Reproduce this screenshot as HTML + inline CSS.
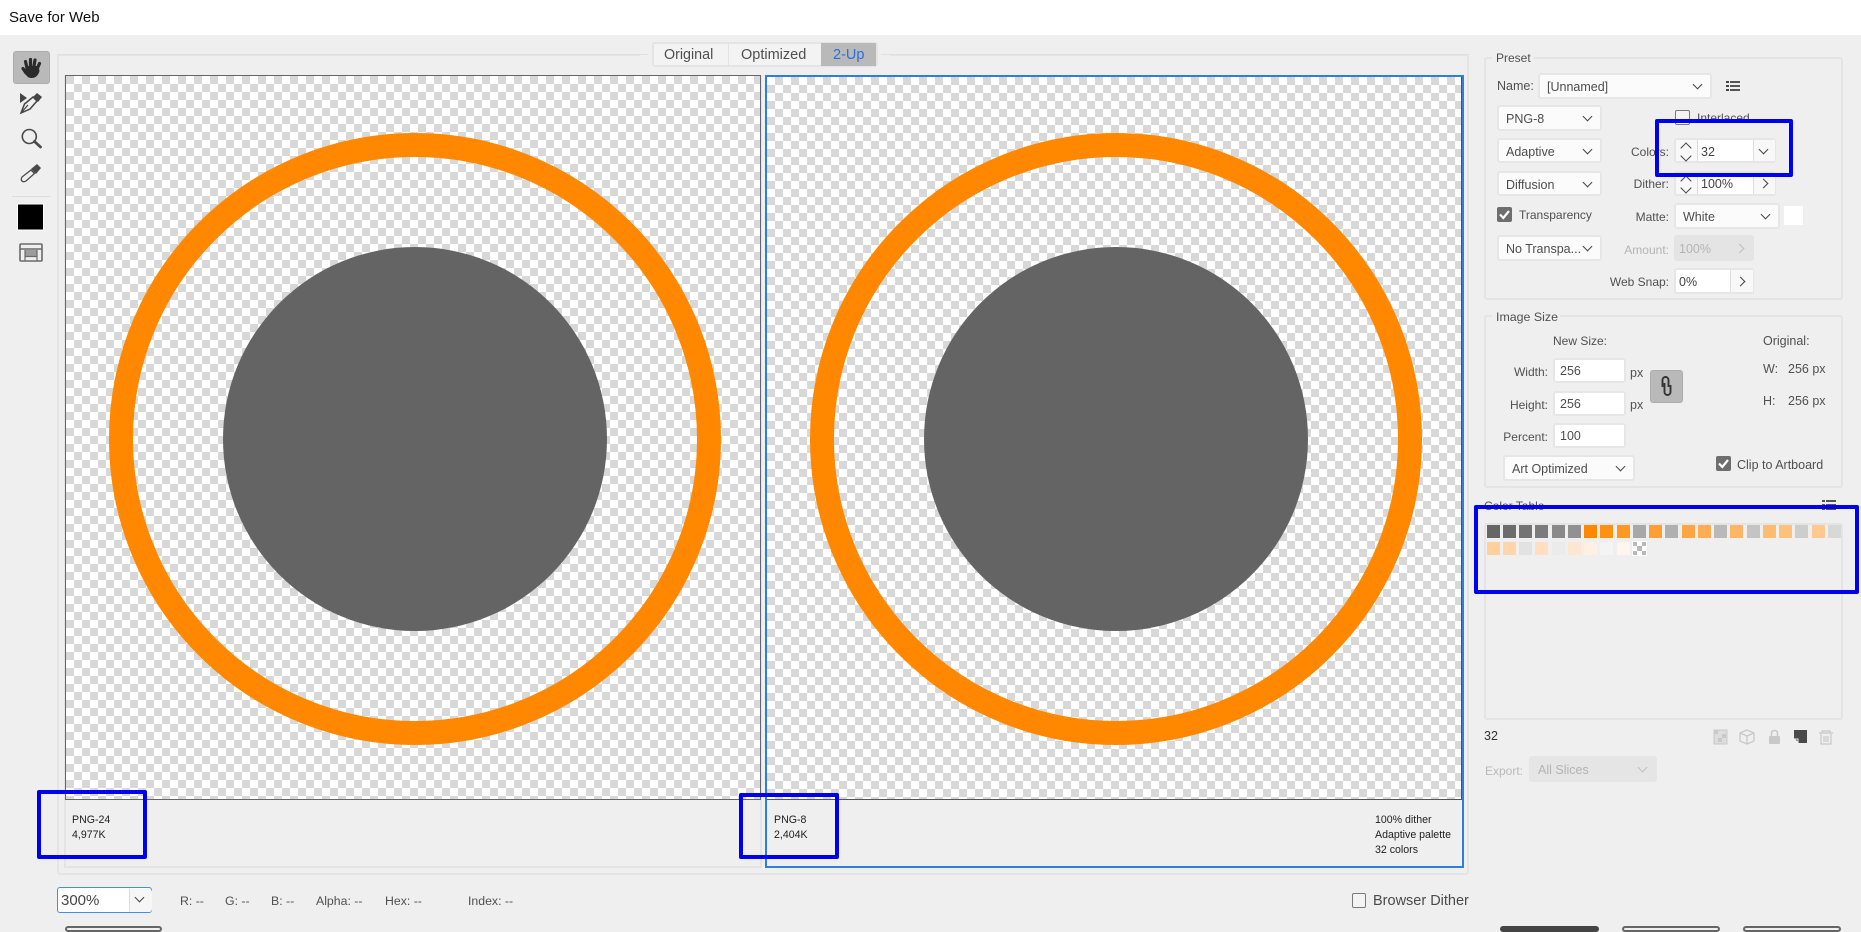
<!DOCTYPE html>
<html><head><meta charset="utf-8"><title>Save for Web</title>
<style>
html,body{margin:0;padding:0;width:1861px;height:928px;overflow:hidden;background:#efefef;font-family:"Liberation Sans",sans-serif;color:#505050;font-size:12.5px}
.a{position:absolute;white-space:nowrap}
.t{position:absolute;white-space:nowrap;line-height:16px}
.r{text-align:right}
.frame{position:absolute;border:2px solid #e4e4e4;border-radius:3px;box-sizing:border-box}
.sel{position:absolute;background:#fbfbfb;border:2px solid #e6e6e6;border-radius:3px;box-sizing:border-box;line-height:24px;padding-left:7px;color:#4d4d4d;font-size:12.5px;white-space:nowrap}
.sel::after{content:"";position:absolute;right:9px;top:6px;width:6px;height:6px;border-right:1.6px solid #444;border-bottom:1.6px solid #444;transform:rotate(45deg)}
.sel.dis{background:#e5e5e5;border-color:#e5e5e5;color:#b4b4b4}
.sel.dis::after{border-color:#c0c0c0}
.inp{position:absolute;background:#fff;border:2px solid #e6e6e6;border-radius:3px;box-sizing:border-box;line-height:23px;padding-left:5px;color:#4d4d4d;font-size:12.5px}
.cb{position:absolute;width:15px;height:15px;box-sizing:border-box;border-radius:2px}
.cb.on{background:#6e6e6e}
.cb.off{border:1.5px solid #7a7a7a;background:#f4f4f4}
.chev{position:absolute;width:6px;height:6px;border-right:1.6px solid #444;border-bottom:1.6px solid #444}
.blue{position:absolute;border:4px solid #0000f0;border-radius:2px;box-sizing:border-box;z-index:20}
.img{position:absolute;top:75px;height:725px;box-sizing:border-box;overflow:hidden;background-color:#fff;background-image:conic-gradient(#d8d8d8 25%,#fff 25% 50%,#d8d8d8 50% 75%,#fff 75%);background-size:16px 16px}
.sw{position:absolute;width:13px;height:13px}
.small{font-size:10.6px;color:#1e1e1e;line-height:15px}
.l{font-size:12px}
</style></head><body>

<div class="a" style="left:0;top:0;width:1861px;height:35px;background:#fff"></div>
<div class="t" style="left:9px;top:9px;font-size:15px;line-height:17px;color:#111">Save for Web</div>

<!-- tool column -->
<div class="a" style="left:13px;top:51px;width:37px;height:33px;background:#b9b9b9;border:1px solid #adadad;border-radius:3px;box-sizing:border-box"></div>
<svg class="a" style="left:0;top:0" width="60" height="270" viewBox="0 0 60 270">
 <g stroke="#2a2a2a" stroke-linecap="round" fill="none">
  <g stroke-width="3.200"><path d="M27 68L25.500 61.500M30.500 66L30.500 59.500M34 66L35 60M37.500 68L39.500 63.500M26 73L23 68.500"/></g>
 </g>
 <path d="M25.500 66H38.500L39.500 71Q37.500 78 31.500 78Q27 78 25 73Z" fill="#2a2a2a"/>
 <path d="M20 93L27 98L20 103Z" fill="#444"/>
 <path d="M21 113L24.500 104L33 97L37 101L30 109Z" fill="none" stroke="#444" stroke-width="1.500"/>
 <path d="M21 113L28 105" stroke="#444" stroke-width="1.200"/>
 <path d="M33 97L37 93L42 97L38 102Z" fill="#444"/>
 <circle cx="29.300" cy="136.500" r="7" fill="none" stroke="#4a4a4a" stroke-width="1.600"/>
 <path d="M34.500 141.500L40.500 147" stroke="#4a4a4a" stroke-width="2.800" stroke-linecap="round"/>
 <path d="M22 181Q20.500 180 22 177L31 170L34.500 173.500L26 181Q23.500 182.500 22 181Z" fill="none" stroke="#4a4a4a" stroke-width="1.300"/>
 <path d="M31 169L37 164L41 168L36 174Z" fill="#4a4a4a"/>
 <rect x="12" y="196" width="38" height="1" fill="#dcdcdc"/>
 <rect x="17.500" y="204" width="26" height="26" fill="#000" stroke="#fff" stroke-width="1"/>
 <rect x="20" y="244" width="22" height="17" rx="1" fill="none" stroke="#6a6a6a" stroke-width="1.600"/>
 <path d="M20 249H42" stroke="#6a6a6a" stroke-width="1.500"/>
 <rect x="25" y="250" width="12" height="6" fill="#9c9c9c"/>
 <path d="M25 250V261M37 250V261M25 256.500H37" stroke="#6a6a6a" stroke-width="1.200"/>
</svg>

<!-- main frame -->
<div class="frame" style="left:57px;top:54px;width:1412px;height:821px"></div>
<div class="a" style="left:64px;top:75px;width:698px;height:793px;border:2px solid #e4e4e4;box-sizing:border-box"></div>
<div class="a" style="left:640px;top:50px;width:250px;height:10px;background:#efefef"></div>
<div class="a" style="left:57px;top:54px;width:591px;height:1px;background:#e0e0e0"></div>
<div class="a" style="left:881px;top:54px;width:588px;height:1px;background:#e0e0e0"></div>

<!-- tabs -->
<div class="a" style="left:652px;top:42px;width:226px;height:25px;border:2px solid #e4e4e4;border-radius:3px;box-sizing:border-box;background:#f3f3f3"></div>
<div class="a" style="left:728px;top:43px;width:1px;height:23px;background:#e2e2e2"></div>
<div class="a" style="left:821px;top:43px;width:55px;height:23px;background:#b9b9b9"></div>
<div class="t" style="left:664px;top:47px;font-size:14.300px;color:#4f4f4f">Original</div>
<div class="t" style="left:741px;top:47px;font-size:14.500px;color:#4f4f4f">Optimized</div>
<div class="t" style="left:833px;top:47px;font-size:14.500px;color:#2b6fdc">2-Up</div>

<!-- left image -->
<div class="img" style="left:65px;width:696px;border:1.500px solid #666;background-position:-8px 0">
 <svg width="696" height="725" viewBox="0 0 696 725" style="position:absolute;left:-1.500px;top:-1.500px">
  <circle cx="350" cy="364" r="294" fill="none" stroke="#ff8800" stroke-width="24"/>
  <circle cx="350" cy="364" r="192" fill="#646464"/>
 </svg>
</div>
<!-- right image -->
<div class="a" style="left:765px;top:75px;width:699px;height:793px;border:2px solid #2a7fe0;box-sizing:border-box"></div>
<div class="img" style="left:767px;top:77px;height:723px;width:695px;border-bottom:1px solid #555;border-right:1px solid #555">
 <svg width="696" height="725" viewBox="0 0 696 725" style="position:absolute;left:-1px;top:-1px">
  <circle cx="350" cy="363" r="294" fill="none" stroke="#ff8800" stroke-width="24"/>
  <circle cx="350" cy="363" r="192" fill="#646464"/>
 </svg>
</div>

<div class="t small" style="left:72px;top:813px">PNG-24<br>4,977K</div>
<div class="t small" style="left:774px;top:813px">PNG-8<br>2,404K</div>
<div class="t small" style="left:1375px;top:813px">100% dither<br>Adaptive palette<br>32 colors</div>

<!-- bottom status -->
<div class="a" style="left:57px;top:887px;width:95px;height:26px;background:#fff;border:1.500px solid #3f8ee8;border-radius:3px;box-sizing:border-box"></div>
<div class="a" style="left:129px;top:889px;width:23px;height:23px;background:#f6f6f6;border-left:1px solid #ddd;box-sizing:border-box;border-radius:0 3px 3px 0"></div>
<div class="chev" style="left:136px;top:894px;transform:rotate(45deg)"></div>
<div class="t" style="left:61px;top:893px;font-size:15px;color:#444">300%</div>
<div class="t" style="left:180px;top:893px;font-size:12.300px">R: --</div>
<div class="t" style="left:225px;top:893px;font-size:12.300px">G: --</div>
<div class="t" style="left:271px;top:893px;font-size:12.300px">B: --</div>
<div class="t" style="left:316px;top:893px;font-size:12.300px">Alpha: --</div>
<div class="t" style="left:385px;top:893px;font-size:12.300px">Hex: --</div>
<div class="t" style="left:468px;top:893px;font-size:12.300px">Index: --</div>
<div class="cb off" style="left:1352px;top:893px;width:14px"></div>
<div class="t" style="left:1373px;top:893px;font-size:14.500px;color:#4a4a4a">Browser Dither</div>

<!-- bottom buttons peeking -->
<div class="a" style="left:65px;top:926px;width:97px;height:6px;border:2px solid #666;border-radius:6px;box-sizing:border-box"></div>
<div class="a" style="left:1500px;top:926px;width:99px;height:6px;background:#444;border-radius:6px"></div>
<div class="a" style="left:1622px;top:926px;width:98px;height:6px;border:2px solid #666;border-radius:6px;box-sizing:border-box"></div>
<div class="a" style="left:1743px;top:926px;width:98px;height:6px;border:2px solid #666;border-radius:6px;box-sizing:border-box"></div>

<!-- Preset -->
<div class="frame" style="left:1484px;top:57px;width:359px;height:243px"></div>
<div class="a" style="left:1492px;top:52px;width:42px;height:12px;background:#efefef"></div>
<div class="t l" style="left:1496px;top:50px">Preset</div>
<div class="t" style="left:1497px;top:78px">Name:</div>
<div class="sel" style="left:1538px;top:73px;width:174px;height:26px">[Unnamed]</div>
<svg class="a" style="left:1726px;top:80px" width="14" height="11"><path d="M0 1h3v2H0zM0 5h3v2H0zM0 9h3v2H0z" fill="#444"/><path d="M4 1h10v2H4zM4 5h10v2H4zM4 9h10v2H4z" fill="#555"/></svg>
<div class="sel" style="left:1497px;top:105px;width:105px;height:26px">PNG-8</div>
<div class="sel" style="left:1497px;top:138px;width:105px;height:25px">Adaptive</div>
<div class="sel" style="left:1497px;top:171px;width:105px;height:25px">Diffusion</div>
<div class="cb on" style="left:1497px;top:207px"><svg width="15" height="15"><path d="M3 7.500L6.300 11L12 4" fill="none" stroke="#fff" stroke-width="2.200"/></svg></div>
<div class="t l" style="left:1519px;top:207px">Transparency</div>
<div class="sel" style="left:1497px;top:235px;width:105px;height:26px">No Transpa...</div>
<div class="cb off" style="left:1675px;top:110px"></div>
<div class="t l" style="left:1697px;top:110px">Interlaced</div>
<div class="t l r" style="left:1600px;top:144px;width:69px">Colors:</div>
<div class="a" style="left:1674px;top:138px;width:102px;height:25px;background:#fff;border:2px solid #e6e6e6;border-radius:3px;box-sizing:border-box"></div>
<div class="a" style="left:1676px;top:140px;width:21px;height:21px;background:#f8f8f8;border-right:1px solid #ddd"></div>
<div class="a" style="left:1753px;top:140px;width:21px;height:21px;background:#f8f8f8;border-left:1px solid #ddd"></div>
<div class="chev" style="left:1682px;top:144px;width:7px;height:7px;transform:rotate(-135deg)"></div>
<div class="chev" style="left:1682px;top:152px;width:7px;height:7px;transform:rotate(45deg)"></div>
<div class="chev" style="left:1760px;top:146px;transform:rotate(45deg)"></div>
<div class="t" style="left:1701px;top:144px;color:#444">32</div>
<div class="t l r" style="left:1600px;top:176px;width:69px">Dither:</div>
<div class="a" style="left:1674px;top:171px;width:102px;height:25px;background:#fff;border:2px solid #e6e6e6;border-radius:3px;box-sizing:border-box"></div>
<div class="a" style="left:1676px;top:173px;width:21px;height:21px;background:#f8f8f8;border-right:1px solid #ddd"></div>
<div class="a" style="left:1753px;top:173px;width:21px;height:21px;background:#f8f8f8;border-left:1px solid #ddd"></div>
<div class="chev" style="left:1682px;top:177px;width:7px;height:7px;transform:rotate(-135deg)"></div>
<div class="chev" style="left:1682px;top:184px;width:7px;height:7px;transform:rotate(45deg)"></div>
<div class="chev" style="left:1760px;top:180px;transform:rotate(-45deg)"></div>
<div class="t" style="left:1701px;top:176px;color:#444">100%</div>
<div class="t l r" style="left:1600px;top:209px;width:69px">Matte:</div>
<div class="sel" style="left:1674px;top:203px;width:106px;height:26px">White</div>
<div class="a" style="left:1784px;top:206px;width:19px;height:19px;background:#fff"></div>
<div class="t l r" style="left:1600px;top:242px;width:69px;color:#b4b4b4">Amount:</div>
<div class="a" style="left:1674px;top:235px;width:80px;height:26px;background:#e4e4e4;border-radius:3px"></div>
<div class="t" style="left:1679px;top:241px;color:#b4b4b4">100%</div>
<div class="chev" style="left:1736px;top:245px;transform:rotate(-45deg);border-color:#bdbdbd"></div>
<div class="t l r" style="left:1590px;top:274px;width:79px">Web Snap:</div>
<div class="a" style="left:1674px;top:268px;width:80px;height:26px;background:#fff;border:2px solid #e6e6e6;border-radius:3px;box-sizing:border-box"></div>
<div class="a" style="left:1730px;top:270px;width:22px;height:22px;background:#f8f8f8;border-left:1px solid #ddd"></div>
<div class="chev" style="left:1737px;top:278px;transform:rotate(-45deg)"></div>
<div class="t" style="left:1679px;top:274px;color:#444">0%</div>

<!-- Image Size -->
<div class="frame" style="left:1484px;top:315px;width:359px;height:173px"></div>
<div class="a" style="left:1492px;top:310px;width:68px;height:12px;background:#efefef"></div>
<div class="t" style="left:1496px;top:309px;font-size:12.400px">Image Size</div>
<div class="t l" style="left:1553px;top:333px">New Size:</div>
<div class="t" style="left:1763px;top:333px">Original:</div>
<div class="t l r" style="left:1490px;top:364px;width:58px">Width:</div>
<div class="inp" style="left:1553px;top:358px;width:73px;height:25px">256</div>
<div class="t" style="left:1630px;top:365px">px</div>
<div class="t l r" style="left:1490px;top:397px;width:58px">Height:</div>
<div class="inp" style="left:1553px;top:391px;width:73px;height:25px">256</div>
<div class="t" style="left:1630px;top:397px">px</div>
<div class="t l r" style="left:1490px;top:429px;width:58px">Percent:</div>
<div class="inp" style="left:1553px;top:423px;width:73px;height:25px">100</div>
<div class="a" style="left:1650px;top:370px;width:33px;height:33px;background:#b9b9b9;border:1px solid #adadad;border-radius:3px;box-sizing:border-box"></div>
<svg class="a" style="left:1660px;top:375px" width="13" height="22"><path d="M8.500 12V5a3 3 0 0 0-6 0V12M4.500 8V17a3 3 0 0 0 6 0V10" fill="none" stroke="#333" stroke-width="1.900"/></svg>
<div class="t" style="left:1763px;top:361px">W:</div>
<div class="t" style="left:1788px;top:361px">256 px</div>
<div class="t" style="left:1763px;top:393px">H:</div>
<div class="t" style="left:1788px;top:393px">256 px</div>
<div class="sel" style="left:1503px;top:455px;width:132px;height:26px">Art Optimized</div>
<div class="cb on" style="left:1716px;top:456px"><svg width="15" height="15"><path d="M3 7.500L6.300 11L12 4" fill="none" stroke="#fff" stroke-width="2.200"/></svg></div>
<div class="t" style="left:1737px;top:457px">Clip to Artboard</div>

<!-- Color table -->
<div class="t l" style="left:1484px;top:498px">Color Table</div>
<svg class="a" style="left:1822px;top:499px" width="14" height="11"><path d="M0 1h3v2H0zM0 5h3v2H0zM0 9h3v2H0zM4 1h10v2H4zM4 5h10v2H4zM4 9h10v2H4z" fill="#555"/></svg>
<div class="frame" style="left:1484px;top:523px;width:359px;height:197px"></div>
<div class="sw" style="left:1487px;top:525px;background:#666"></div>
<div class="sw" style="left:1503px;top:525px;background:#6c6c6c"></div>
<div class="sw" style="left:1519px;top:525px;background:#737373"></div>
<div class="sw" style="left:1535px;top:525px;background:#7b7b7b"></div>
<div class="sw" style="left:1552px;top:525px;background:#898989"></div>
<div class="sw" style="left:1568px;top:525px;background:#919191"></div>
<div class="sw" style="left:1584px;top:525px;background:#ff8800"></div>
<div class="sw" style="left:1600px;top:525px;background:#ff9011"></div>
<div class="sw" style="left:1617px;top:525px;background:#ff9822"></div>
<div class="sw" style="left:1633px;top:525px;background:#a8a8a8"></div>
<div class="sw" style="left:1649px;top:525px;background:#ff9e33"></div>
<div class="sw" style="left:1665px;top:525px;background:#b0b0b0"></div>
<div class="sw" style="left:1682px;top:525px;background:#ffa644"></div>
<div class="sw" style="left:1698px;top:525px;background:#ffad55"></div>
<div class="sw" style="left:1714px;top:525px;background:#b9b9b9"></div>
<div class="sw" style="left:1730px;top:525px;background:#ffb566"></div>
<div class="sw" style="left:1747px;top:525px;background:#c4c4c4"></div>
<div class="sw" style="left:1763px;top:525px;background:#ffbb70"></div>
<div class="sw" style="left:1779px;top:525px;background:#ffc07a"></div>
<div class="sw" style="left:1795px;top:525px;background:#cdcdcd"></div>
<div class="sw" style="left:1812px;top:525px;background:#ffc88e"></div>
<div class="sw" style="left:1828px;top:525px;background:#d8d8d8"></div>
<div class="sw" style="left:1487px;top:542px;background:#ffcf9c"></div>
<div class="sw" style="left:1503px;top:542px;background:#ffd6ac"></div>
<div class="sw" style="left:1519px;top:542px;background:#e2e2e2"></div>
<div class="sw" style="left:1535px;top:542px;background:#ffdfc0"></div>
<div class="sw" style="left:1552px;top:542px;background:#ebebeb"></div>
<div class="sw" style="left:1568px;top:542px;background:#ffe6d0"></div>
<div class="sw" style="left:1584px;top:542px;background:#fff0e2"></div>
<div class="sw" style="left:1600px;top:542px;background:#f4f4f4"></div>
<div class="sw" style="left:1617px;top:542px;background:#fff5ef"></div>
<svg class="a" style="left:1632px;top:541px" width="15" height="15"><rect width="15" height="15" fill="#fff"/><path d="M1 1h4v4H1zM10 1h4v4h-4zM5 5h5v5H5zM1 10h4v4H1zM10 10h4v4h-4z" fill="#b9b9b9"/></svg>

<div class="t" style="left:1484px;top:728px;color:#333">32</div>
<svg class="a" style="left:1712px;top:728px" width="125" height="18">
 <rect x="2" y="2" width="13" height="14" fill="#ddd" stroke="#c8c8c8"/><path d="M2 2h4v4H2zM10 6h4v4h-4zM6 10h4v4H6z" fill="#c9c9c9"/>
 <path d="M28 5L35 2L42 5V13L35 16L28 13ZM28 5L35 8L42 5M35 8V16" fill="none" stroke="#c8c8c8" stroke-width="1.300"/>
 <rect x="57" y="8" width="11" height="8" rx="1" fill="#c8c8c8"/><path d="M59.500 8V5Q59.500 2.500 62.500 2.500Q65.500 2.500 65.500 5V8" fill="none" stroke="#c8c8c8" stroke-width="1.500"/>
 <path d="M82 2H95V15H87L82 10Z" fill="#4a4a4a"/><path d="M82 11H86V15" fill="none" stroke="#efefef"/>
 <path d="M107 5H121M110 5V3H118V5M109 6V16H119V6M112 8V14M114 8V14M116 8V14" fill="none" stroke="#c8c8c8" stroke-width="1.200"/>
</svg>
<div class="t l" style="left:1485px;top:763px;color:#b9b9b9">Export:</div>
<div class="sel dis" style="left:1529px;top:756px;width:128px;height:26px;line-height:25px">All Slices</div>

<!-- blue annotation rectangles -->
<div class="blue" style="left:1655px;top:119px;width:138px;height:58px"></div>
<div class="blue" style="left:1474px;top:505px;width:385px;height:89px"></div>
<div class="blue" style="left:37px;top:790px;width:110px;height:69px"></div>
<div class="blue" style="left:739px;top:793px;width:100px;height:66px"></div>
</body></html>
